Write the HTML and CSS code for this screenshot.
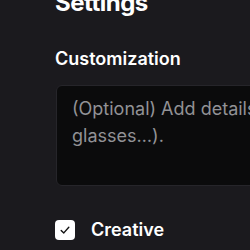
FILE: index.html
```html
<!DOCTYPE html>
<html>
<head>
<meta charset="utf-8">
<link rel="stylesheet" href="styles.css">
</head>
<body>
<div class="panel">
  <h1 class="title">Settings</h1>
  <section class="field">
    <label class="label">Customization</label>
    <div class="textarea"><span class="placeholder">(Optional) Add details about the person (hair, clothes,<br>glasses…).</span></div>
  </section>
  <label class="check-row">
    <span class="checkbox"><svg width="14" height="14" viewBox="0 0 14 14"><path d="M3.2 7.4 L5.8 9.9 L10.8 4.3" fill="none" stroke="#111" stroke-width="1.4" stroke-linecap="round" stroke-linejoin="round"/></svg></span>
    <span class="check-label">Creative</span>
  </label>
</div>
</body>
</html>
```
FILE: styles.css
```css
html, body {
  margin: 0;
  padding: 0;
  background: #1b1a1e;
  overflow: hidden;
  width: 250px;
  height: 250px;
}
body {
  font-family: Inter, "Noto Sans", sans-serif;
  color: #ffffff;
}
.panel {
  display: flex;
  flex-direction: column;
  padding-left: 55px;
  margin-top: -13px;
}
.title {
  margin: 0;
  font-size: 24px;
  line-height: 32px;
  font-weight: 700;
  letter-spacing: -0.5px;
}
.field {
  display: flex;
  flex-direction: column;
  margin-top: 26px;
  gap: 13px;
}
.label {
  font-size: 18px;
  line-height: 27px;
  font-weight: 600;
}
.textarea {
  width: 400px;
  margin-left: 1px;
  background: #0b0b0c;
  border: 1px solid #26252a;
  border-radius: 6px;
  padding: 9px 15px;
  box-sizing: border-box;
  height: 101px;
  white-space: nowrap;
  overflow: hidden;
}
.placeholder {
  font-size: 18px;
  line-height: 27px;
  color: #929296;
}
.check-row {
  display: flex;
  align-items: center;
  gap: 16px;
  margin-top: 30px;
}
.checkbox {
  width: 20px;
  height: 20px;
  border-radius: 4px;
  background: #ffffff;
  display: flex;
  align-items: center;
  justify-content: center;
}
.check-label {
  font-size: 18px;
  line-height: 27px;
  font-weight: 600;
}
```
